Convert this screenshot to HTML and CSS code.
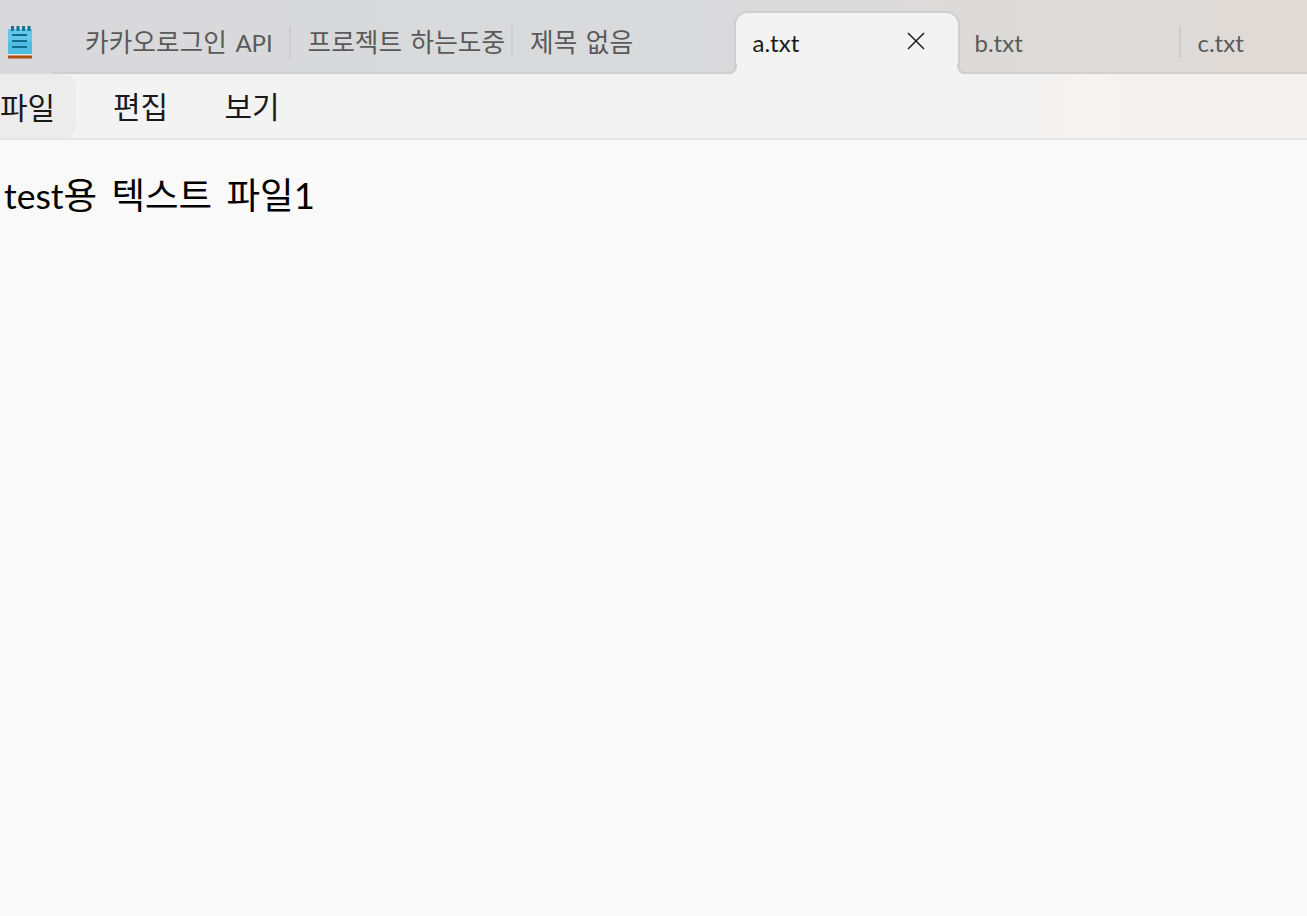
FILE: index.html
```html
<!DOCTYPE html>
<html lang="ko">
<head>
<meta charset="utf-8">
<title>a.txt</title>
<link rel="stylesheet" href="styles.css">
</head>
<body>
<header class="titlebar">
  <div class="app-icon">
    <svg width="26" height="34" viewBox="0 0 26 34">
      <rect x="1" y="4" width="24" height="25" fill="#4fbde2"/>
      <rect x="1" y="4" width="24" height="12" fill="#63c8e8"/>
      <rect x="4" y="1" width="3" height="5" fill="#0f7496"/>
      <rect x="9.500" y="1" width="3" height="5" fill="#0f7496"/>
      <rect x="15" y="1" width="3" height="5" fill="#0f7496"/>
      <rect x="20.500" y="1" width="3" height="5" fill="#0f7496"/>
      <rect x="5" y="9" width="15" height="2" fill="#0f6e90"/>
      <rect x="5" y="15" width="15" height="2" fill="#0f6e90"/>
      <rect x="5" y="21" width="15" height="2" fill="#0f6e90"/>
      <rect x="1" y="29" width="24" height="1.500" fill="#ece6df"/>
      <rect x="1" y="30.500" width="24" height="3" fill="#ad4f0c"/>
    </svg>
  </div>
  <div class="tabs">
    <div class="tab sep">카카오로그인 <span class="latin">API</span></div>
    <div class="tab sep">프로젝트 하는도중</div>
    <div class="tab">제목 없음</div>
    <div class="tab active ascii">
      <span>a.txt</span>
      <svg class="close" width="18" height="18" viewBox="0 0 18 18"><path d="M1 1 L17 17 M17 1 L1 17" stroke="#1c1c1c" stroke-width="1.500" fill="none"/></svg>
    </div>
    <div class="tab sep ascii">b.txt</div>
    <div class="tab last ascii">c.txt</div>
  </div>
</header>
<nav class="menubar">
  <div class="menu hover">파일</div>
  <div class="menu edit">편집</div>
  <div class="menu">보기</div>
</nav>
<main class="editor"><span class="latin-big">test</span>용 텍스트 파일1</main>
</body>
</html>
```
FILE: styles.css
```css
* { box-sizing: border-box; }
html, body { margin: 0; height: 100%; overflow: hidden; }
body {
  width: 1307px;
  height: 916px;
  display: flex;
  flex-direction: column;
  font-family: "Lato", "Noto Sans CJK KR", sans-serif;
  background: #f9f9f9;
}
.titlebar {
  height: 74px;
  flex: none;
  display: flex;
  position: relative;
  background: linear-gradient(90deg, #d9d9db 0%, #d9dadc 50%, #dfdad6 100%);
}
.titlebar::after {
  content: "";
  position: absolute;
  left: 52px;
  right: 0;
  bottom: 0;
  height: 2px;
  background: #cfcfcf;
}
.app-icon {
  width: 68px;
  flex: none;
  padding: 25px 0 0 7px;
  font-size: 0;
}
.tabs { display: flex; flex: 1; min-width: 0; }
.tab {
  width: 222.5px;
  height: 74px;
  padding: 24px 0 0 17px;
  flex: none;
  position: relative;
  font-size: 25.7px;
  line-height: 36px;
  word-spacing: 2px;
  color: #5a5a5a;
  white-space: nowrap;
  overflow: hidden;
}
.latin { font-size: 24px; }
.ascii { font-size: 24px; padding-top: 25px; }
.sep::after {
  content: "";
  position: absolute;
  right: 0;
  top: 26px;
  width: 2px;
  height: 32px;
  background: #cdcdcf;
}
.tab.last { flex: 1; width: auto; min-width: 0; padding-left: 17px; }
.tab.active + .tab { padding-left: 16px; width: 222px; }
.tab.active {
  width: 226px;
  height: 63px;
  margin: 11px -1px 0 -2px;
  padding: 12px 0 0 17px;
  display: flex;
  justify-content: space-between;
  background: #f3f3f4;
  color: #1a1a1a;
  border: 2px solid #cfcfcf;
  border-bottom: 0;
  border-radius: 14px 14px 0 0;
  overflow: visible;
  z-index: 1;
}
.tab.active::before,
.tab.active::after {
  content: "";
  position: absolute;
  bottom: 0;
  width: 8px;
  height: 8px;
  border-bottom: 2px solid #cfcfcf;
}
.tab.active::before {
  left: -9px;
  border-right: 2px solid #cfcfcf;
  border-bottom-right-radius: 8px;
  box-shadow: 3px 3px 0 #f3f3f4;
}
.tab.active::after {
  right: -9px;
  border-left: 2px solid #cfcfcf;
  border-bottom-left-radius: 8px;
  box-shadow: -3px 3px 0 #f3f3f4;
}
.close { margin: 7px 33px 0 0; flex: none; }
.menubar {
  height: 66px;
  flex: none;
  display: flex;
  position: relative;
  z-index: 2;
  background: linear-gradient(90deg, #f3f3f4 0%, #f3f3f4 60%, #f5f3f1 100%);
  border-bottom: 2px solid #e5e5e5;
}
.menu {
  width: 112px;
  height: 62px;
  display: flex;
  align-items: center;
  font-size: 30px;
  color: #1a1a1a;
}
.menu.hover {
  width: 76px;
  height: 64px;
  background: #ececed;
  border-radius: 0 12px 12px 0;
}
.menu.edit { margin-left: 37px; width: 111.5px; }
.editor {
  padding: 31px 0 0 4px;
  font-size: 36.5px;
  line-height: 48px;
  word-spacing: 5px;
  color: #000;
  flex: 1;
}
.latin-big { font-size: 35.5px; }
```
